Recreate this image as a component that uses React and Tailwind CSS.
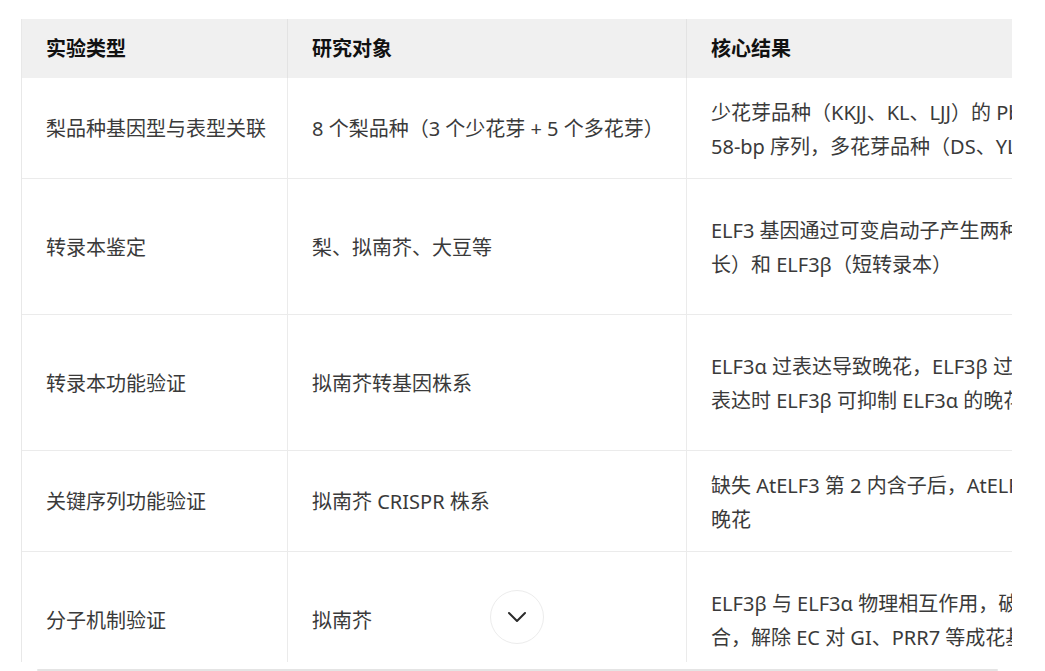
import React from 'react';

const rows = [
  {
    h: 'h-[100px]',
    type: '梨品种基因型与表型关联',
    subject: '8 个梨品种（3 个少花芽 + 5 个多花芽）',
    result: ['少花芽品种（KKJJ、KL、LJJ）的 PbELF3 第 2 内含子中存在', '58-bp 序列，多花芽品种（DS、YL、HS 等）缺失该序列'],
  },
  {
    h: 'h-[136px]',
    type: '转录本鉴定',
    subject: '梨、拟南芥、大豆等',
    result: ['ELF3 基因通过可变启动子产生两种转录本：ELF3α（', '长）和 ELF3β（短转录本）'],
  },
  {
    h: 'h-[136px]',
    type: '转录本功能验证',
    subject: '拟南芥转基因株系',
    result: ['ELF3α 过表达导致晚花，ELF3β 过表达导致早花，共', '表达时 ELF3β 可抑制 ELF3α 的晚花效应'],
  },
  {
    h: 'h-[101px]',
    type: '关键序列功能验证',
    subject: '拟南芥 CRISPR 株系',
    result: ['缺失 AtELF3 第 2 内含子后，AtELF3β 表达降低，植株', '晚花'],
  },
  {
    h: 'h-[136px]',
    type: '分子机制验证',
    subject: '拟南芥',
    result: ['ELF3β 与 ELF3α 物理相互作用，破坏 ELF3α 与 ELF4、LUX 的结', '合，解除 EC 对 GI、PRR7 等成花基因的抑制'],
  },
];

export default function App() {
  return (
    <div
      className="relative w-[1045px] h-[671px] bg-white overflow-hidden"
      style={{ fontFamily: '"Noto Sans", "Noto Sans CJK SC", sans-serif' }}
    >
      <div className="pt-[19px] pl-[21px]">
        {/* scroll area */}
        <div className="w-[991px] h-[643px] overflow-hidden border-l border-[#e8e8e8]">
          <div className="w-[1400px]">
            {/* Header */}
            <div className="flex h-[59px] bg-[#f0f0f0] text-[20px] font-bold text-[#111] whitespace-nowrap">
              <div className="w-[266px] shrink-0 flex items-center px-6 border-r border-[#e3e3e3]">实验类型</div>
              <div className="w-[399px] shrink-0 flex items-center px-6 border-r border-[#e3e3e3]">研究对象</div>
              <div className="w-[720px] shrink-0 flex items-center px-6">核心结果</div>
            </div>

            {/* Body */}
            {rows.map((r, i) => (
              <div
                key={i}
                className={`flex ${r.h} text-[20px] text-[#3a3a3a] leading-[34px] whitespace-nowrap ${i > 0 ? 'border-t border-[#ebebeb]' : ''}`}
              >
                <div className="w-[266px] shrink-0 flex items-center pl-6 pr-2 pt-[2px] border-r border-[#ebebeb]">{r.type}</div>
                <div className="w-[399px] shrink-0 flex items-center px-6 pt-[2px] border-r border-[#ebebeb]">{r.subject}</div>
                <div className="w-[720px] shrink-0 flex flex-col justify-center px-6 pt-[3px]">
                  {r.result.map((line, j) => (
                    <div key={j}>{line}</div>
                  ))}
                </div>
              </div>
            ))}
          </div>
        </div>
        {/* scrollbar */}
        <div className="mt-[7px] ml-[16px] w-[961px] h-[2px] bg-[#e4e4e4] rounded-full"></div>
      </div>

      {/* expand button */}
      <button className="absolute left-[490px] top-[590px] w-[54px] h-[54px] rounded-full bg-white border border-[#ececec] flex items-center justify-center">
        <svg width="20" height="12" viewBox="0 0 20 12" fill="none">
          <path d="M2 2 L10 10 L18 2" stroke="#2b2b2b" strokeWidth="2" strokeLinecap="round" strokeLinejoin="round" />
        </svg>
      </button>
    </div>
  );
}
